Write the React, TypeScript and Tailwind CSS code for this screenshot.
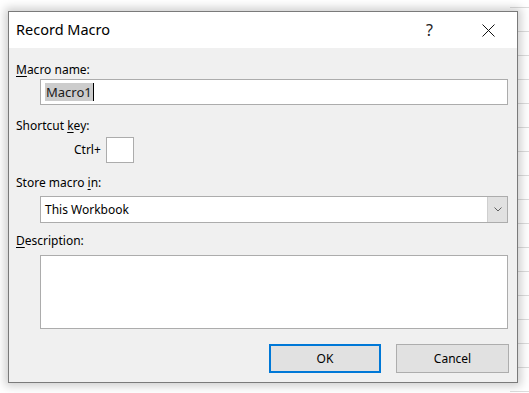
import React from 'react'

const FONT = "font-['Noto_Sans','Liberation_Sans',sans-serif]"

function Label({ pre, u, post }: { pre?: string; u: string; post: string }) {
  return (
    <div className="h-4 text-[12px] leading-4 text-black ml-[7px]">
      {pre}
      <span className="underline underline-offset-2">{u}</span>
      {post}
    </div>
  )
}

export default function App() {
  return (
    <div
      className={`w-[529px] h-[393px] overflow-hidden bg-white pt-[11px] pl-[8px] ${FONT}
        bg-[linear-gradient(to_right,#fff_510px,transparent_510px),linear-gradient(to_right,#dcdcdc_1px,transparent_1px),linear-gradient(to_bottom,#dcdcdc_1px,transparent_1px)]
        [background-size:100%_100%,80px_24px,80px_24px] [background-position:0_0,27px_7px,27px_7px]`}
    >
      <div className="w-[510px] h-[372px] border border-[#7a7a7a] bg-[#f0f0f0] flex flex-col shadow-[0_0_9px_3px_rgba(0,0,0,0.2)]">
        {/* Title bar */}
        <div className="h-[36px] bg-white flex items-center shrink-0">
          <span className="ml-[7px] text-[14.5px] text-black">Record Macro</span>
          <span className="ml-auto mr-[49px] text-[16px] text-[#222]">?</span>
          <svg className="mr-[22px]" width="13" height="13" viewBox="0 0 13 13">
            <path d="M0.5 0.5 L12.5 12.5 M12.5 0.5 L0.5 12.5" stroke="#111" strokeWidth="1" />
          </svg>
        </div>

        <div className="flex flex-col pt-[14px]">
          <Label u="M" post="acro name:" />
          <div className="mt-px ml-[31px] w-[468px] h-[26px] bg-white border border-[#acacac] flex items-center pl-1">
            <span className="bg-[#cccccc] text-[13px] leading-[18px] px-px text-[#1a1a1a]">Macro1</span>
            <span className="w-px h-[18px] bg-black" />
          </div>

          <div className="mt-[13px]">
            <Label pre="Shortcut " u="k" post="ey:" />
          </div>
          <div className="mt-[3px] flex items-center">
            <span className="ml-[65px] text-[12px] text-black">Ctrl+</span>
            <div className="ml-[5px] w-[28px] h-[26px] bg-white border border-[#acacac]" />
          </div>

          <div className="mt-[12px]">
            <Label pre="Store macro " u="i" post="n:" />
          </div>
          <div className="mt-[5px] ml-[31px] w-[468px] h-[27px] bg-white border border-[#acacac] flex items-stretch">
            <span className="flex-1 pl-1 flex items-center text-[12px] text-black">This Workbook</span>
            <div className="w-[20px] bg-[#e1e1e1] border-l border-[#cfcfcf] flex items-center justify-center">
              <svg width="8" height="5" viewBox="0 0 8 5">
                <path d="M0.5 0.5 L4 4 L7.5 0.5" fill="none" stroke="#606060" strokeWidth="1" />
              </svg>
            </div>
          </div>

          <div className="mt-[10px]">
            <Label u="D" post="escription:" />
          </div>
          <div className="mt-[6px] ml-[31px] w-[468px] h-[74px] bg-white border border-[#acacac]" />

          <div className="mt-[15px] flex justify-end gap-[15px] mr-[8px]">
            <button className="w-[112px] h-[29px] bg-[#e1e1e1] border-2 border-[#0078d7] text-[12px] text-black">
              OK
            </button>
            <button className="w-[113px] h-[29px] bg-[#e1e1e1] border border-[#adadad] text-[12px] text-black">
              Cancel
            </button>
          </div>
        </div>
      </div>
    </div>
  )
}
